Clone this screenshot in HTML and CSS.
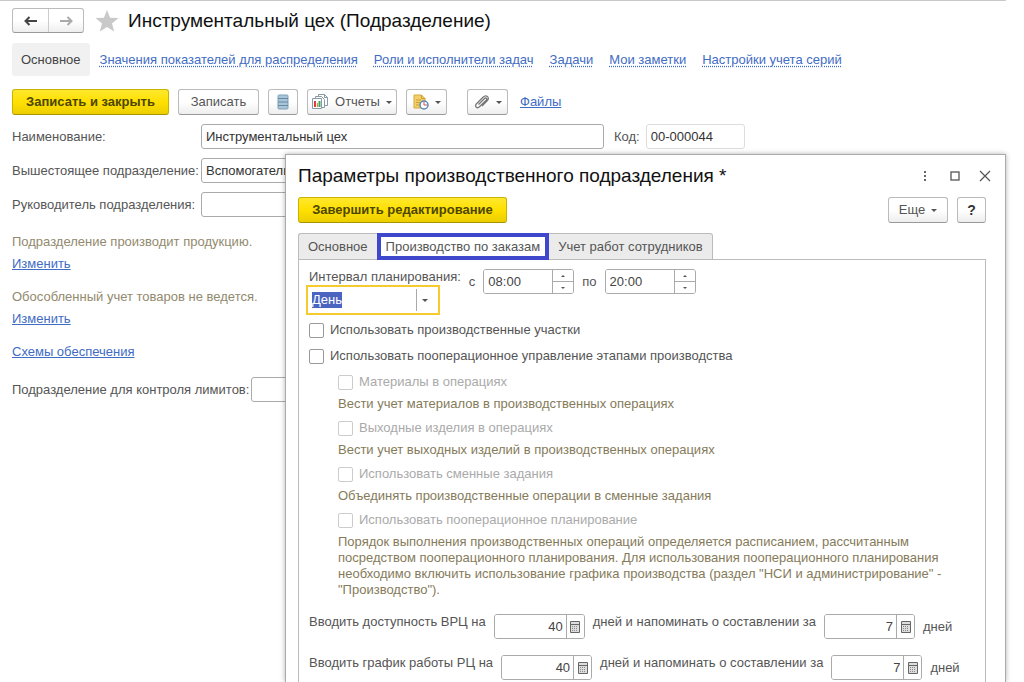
FILE: index.html
```html
<!DOCTYPE html>
<html lang="ru">
<head>
    <meta charset="UTF-8">
    <meta name="viewport" content="width=device-width, initial-scale=1.0">
    <title>Инструментальный цех (Подразделение)</title>
    <link rel="stylesheet" href="styles.css">
</head>
<body>
    <div class="page">
        <div class="titlebar">
            <div class="history">
                <button type="button" aria-label="Назад"><svg width="16" height="12" viewBox="0 0 16 12"><path d="M14 6H3M6.500 2L2.500 6l4 4" fill="none" stroke="#444" stroke-width="2"/></svg></button>
                <button type="button" aria-label="Вперед"><svg width="16" height="12" viewBox="0 0 16 12"><path d="M2 6h11M9.500 2l4 4l-4 4" fill="none" stroke="#aaa" stroke-width="2"/></svg></button>
            </div>
            <svg class="star" width="24" height="22" viewBox="0 0 24 22"><path d="M12 0l3.100 7.700 8.400.4-6.500 5.300 2.200 8-7.200-4.500-7.200 4.500 2.200-8L.5 8.100l8.400-.4z" fill="#c9c9c9"/></svg>
            <h1>Инструментальный цех (Подразделение)</h1>
        </div>
        <nav class="sections">
            <a class="current" href="#">Основное</a>
            <a href="#">Значения показателей для распределения</a>
            <a href="#">Роли и исполнители задач</a>
            <a href="#">Задачи</a>
            <a href="#">Мои заметки</a>
            <a href="#">Настройки учета серий</a>
        </nav>
        <div class="toolbar">
            <button type="button" class="btn yellow save">Записать и закрыть</button>
            <button type="button" class="btn write">Записать</button>
            <button type="button" class="btn icon" aria-label="Список">
                <svg width="12" height="16" viewBox="0 0 12 16"><rect x="1" y="1" width="10" height="14" rx="1" fill="#a9c6d9" stroke="#7c9fb8"/><path d="M1 4.500h10M1 8h10M1 11.500h10" stroke="#6688a3"/></svg>
            </button>
            <button type="button" class="btn reports">
                <svg width="17" height="16" viewBox="0 0 17 16"><path d="M6.500.5h6l3 3v8h-9z" fill="#fff" stroke="#889aa5"/><path d="M12.500.5v3h3" fill="none" stroke="#889aa5"/><path d="M3.500 2.500h6l3 3v8h-9z" fill="#fff" stroke="#889aa5"/><path d="M.5 4.500h9v10h-9z" fill="#fff" stroke="#889aa5"/><path d="M3 7v6" stroke="#e03c3c" stroke-width="2"/><path d="M5.500 9v4" stroke="#e8872e"/><path d="M7.500 7v6" stroke="#3aa655" stroke-width="2"/></svg>
                Отчеты <span class="arrow"></span>
            </button>
            <button type="button" class="btn drop" aria-label="Создать на основании">
                <svg width="16" height="16" viewBox="0 0 16 16"><path d="M1 1h7.500l3.500 3.500V14H1z" fill="#f3cf69" stroke="#d5a93a"/><path d="M8.500 1v3.500H12M3 6h5M3 8.500h4M3 11h3" fill="none" stroke="#c99f35"/><circle cx="11" cy="11" r="4" fill="#fff" stroke="#5b86b5" stroke-width="1.500"/><path d="M11 8v3h3" fill="none" stroke="#d65050"/></svg>
                <span class="arrow"></span>
            </button>
            <button type="button" class="btn drop attach" aria-label="Присоединить">
                <svg width="16" height="16" viewBox="0 0 16 16"><path d="M4.500 10.500l6-6c1.400-1.300 3 .2 1.700 1.600l-6.700 6.700c-2.500 2.300-5.300-.5-3-3L9 3.200c3.500-3.300 7.200.5 4.200 3.600L8 12" fill="none" stroke="#777" stroke-width="1.300"/></svg>
                <span class="arrow"></span>
            </button>
            <a class="files" href="#">Файлы</a>
        </div>

        <div class="field">
            <label for="name">Наименование:</label>
            <input id="name" class="name" type="text" value="Инструментальный цех">
            <label for="code" class="codelabel">Код:</label>
            <input id="code" class="code" type="text" value="00-000044">
        </div>
        <div class="field">
            <label for="parent">Вышестоящее подразделение:</label>
            <input id="parent" class="name" type="text" value="Вспомогательное производство">
        </div>
        <div class="field">
            <label for="head">Руководитель подразделения:</label>
            <input id="head" class="name" type="text" value="">
        </div>
        <div class="info">
            <p>Подразделение производит продукцию.</p>
            <a href="#">Изменить</a>
        </div>
        <div class="info">
            <p>Обособленный учет товаров не ведется.</p>
            <a href="#">Изменить</a>
        </div>
        <div class="info"><a href="#">Схемы обеспечения</a></div>
        <div class="field limits">
            <label for="limit">Подразделение для контроля лимитов:</label>
            <input id="limit" class="name" type="text" value="">
        </div>

        <!-- окно параметров поверх формы -->
        <div class="window" role="dialog" aria-labelledby="wintitle">
            <div class="winhead">
                <h2 id="wintitle">Параметры производственного подразделения *</h2>
                <button type="button" aria-label="Меню"><svg width="12" height="12" viewBox="0 0 12 12"><path d="M5 1h2v2H5zM5 5h2v2H5zM5 9h2v2H5z" fill="#666"/></svg></button>
                <button type="button" aria-label="Развернуть"><svg width="12" height="12" viewBox="0 0 12 12"><rect x="2" y="2" width="8" height="8" fill="none" stroke="#555" stroke-width="1.300"/></svg></button>
                <button type="button" aria-label="Закрыть"><svg width="12" height="12" viewBox="0 0 12 12"><path d="M1 1l10 10M11 1L1 11" stroke="#555" stroke-width="1.200"/></svg></button>
            </div>
            <div class="wintools">
                <button type="button" class="btn yellow finish">Завершить редактирование</button>
                <button type="button" class="btn more">Еще <span class="arrow"></span></button>
                <button type="button" class="btn help">?</button>
            </div>
            <div class="tabs" role="tablist">
                <button type="button" role="tab">Основное</button>
                <button type="button" role="tab" class="active" aria-selected="true">Производство по заказам</button>
                <button type="button" role="tab">Учет работ сотрудников</button>
            </div>
            <div class="panel">
                <div class="interval">
                    <div class="period">
                        <label for="period">Интервал планирования:</label>
                        <div class="combo">
                            <select id="period">
                                <option>День</option>
                                <option>Неделя</option>
                                <option>Месяц</option>
                            </select>
                            <span class="arrow"></span>
                        </div>
                    </div>
                    <label for="from">с</label>
                    <div class="group time">
                        <input id="from" type="text" value="08:00">
                        <div class="spin">
                            <button type="button" aria-label="Больше"><span class="up"></span></button>
                            <button type="button" aria-label="Меньше"><span class="down"></span></button>
                        </div>
                    </div>
                    <label for="to">по</label>
                    <div class="group time">
                        <input id="to" type="text" value="20:00">
                        <div class="spin">
                            <button type="button" aria-label="Больше"><span class="up"></span></button>
                            <button type="button" aria-label="Меньше"><span class="down"></span></button>
                        </div>
                    </div>
                </div>

                <label class="check"><input type="checkbox">Использовать производственные участки</label>
                <label class="check"><input type="checkbox">Использовать пооперационное управление этапами производства</label>
                <div class="nested">
                    <label class="check"><input type="checkbox" disabled>Материалы в операциях</label>
                    <p>Вести учет материалов в производственных операциях</p>
                    <label class="check"><input type="checkbox" disabled>Выходные изделия в операциях</label>
                    <p>Вести учет выходных изделий в производственных операциях</p>
                    <label class="check"><input type="checkbox" disabled>Использовать сменные задания</label>
                    <p>Объединять производственные операции в сменные задания</p>
                    <label class="check"><input type="checkbox" disabled>Использовать пооперационное планирование</label>
                    <p>Порядок выполнения производственных операций определяется расписанием, рассчитанным<br>
                    посредством пооперационного планирования. Для использования пооперационного планирования<br>
                    необходимо включить использование графика производства (раздел "НСИ и администрирование" -<br>
                    "Производство").</p>
                </div>

                <div class="days">
                    <label for="vrc">Вводить доступность ВРЦ на</label>
                    <div class="group num">
                        <input id="vrc" type="text" value="40">
                        <button type="button" aria-label="Калькулятор"><svg width="10" height="12" viewBox="0 0 10 12"><path d="M.5.5h9v11h-9z" fill="#ddd" stroke="#666"/><path d="M1 3.500h8" stroke="#666"/><path d="M2 5.500h6M2 7.500h6M2 9.500h6" stroke="#888" stroke-dasharray="1 1"/></svg></button>
                    </div>
                    <label for="vrcremind">дней и напоминать о составлении за</label>
                    <div class="group num">
                        <input id="vrcremind" type="text" value="7">
                        <button type="button" aria-label="Калькулятор"><svg width="10" height="12" viewBox="0 0 10 12"><path d="M.5.5h9v11h-9z" fill="#ddd" stroke="#666"/><path d="M1 3.500h8" stroke="#666"/><path d="M2 5.500h6M2 7.500h6M2 9.500h6" stroke="#888" stroke-dasharray="1 1"/></svg></button>
                    </div>
                    <span class="unit">дней</span>
                </div>
                <div class="days">
                    <label for="rc">Вводить график работы РЦ на</label>
                    <div class="group num">
                        <input id="rc" type="text" value="40">
                        <button type="button" aria-label="Калькулятор"><svg width="10" height="12" viewBox="0 0 10 12"><path d="M.5.5h9v11h-9z" fill="#ddd" stroke="#666"/><path d="M1 3.500h8" stroke="#666"/><path d="M2 5.500h6M2 7.500h6M2 9.500h6" stroke="#888" stroke-dasharray="1 1"/></svg></button>
                    </div>
                    <label for="rcremind">дней и напоминать о составлении за</label>
                    <div class="group num">
                        <input id="rcremind" type="text" value="7">
                        <button type="button" aria-label="Калькулятор"><svg width="10" height="12" viewBox="0 0 10 12"><path d="M.5.5h9v11h-9z" fill="#ddd" stroke="#666"/><path d="M1 3.500h8" stroke="#666"/><path d="M2 5.500h6M2 7.500h6M2 9.500h6" stroke="#888" stroke-dasharray="1 1"/></svg></button>
                    </div>
                    <span class="unit">дней</span>
                </div>
            </div>
        </div>
    </div>
</body>
</html>
```
FILE: styles.css
```css
*{
    box-sizing: border-box;
}
body{
    margin: 0;
    padding-right: 18px;
    background: #fff;
    font-family: "Liberation Sans", Arial, sans-serif;
    font-size: 13px;
    line-height: 16px;
    color: #555;
    overflow: hidden;
}
button, input, select{
    font: inherit;
    color: inherit;
    margin: 0;
}
svg{
    flex-shrink: 0;
}
h1, h2, p{
    margin: 0;
}
h1, h2{
    font-size: 19px;
    line-height: 24px;
    font-weight: normal;
    color: #111;
}
a{
    color: #3f6cc4;
}
.page{
    position: relative;
    min-height: 100vh;
    padding: 7px 0 0 12px;
    border-top: 1px solid #c8c8c8;
}
.titlebar{
    display: flex;
    align-items: center;
    height: 25px;
}
.history{
    display: flex;
    border: 1px solid #bbb;
    border-bottom-color: #999;
    border-radius: 3px;
    background: linear-gradient(#fff 50%, #eee);
}
.history button{
    width: 35px;
    height: 23px;
    padding: 0;
    border: 0;
    background: none;
}
.history button + button{
    border-left: 1px solid #ccc;
}
.history svg{
    display: block;
    margin: 0 auto;
}
.star{
    margin: 0 9px 0 11px;
}
.sections{
    display: flex;
    align-items: center;
    gap: 16px;
    margin-top: 10px;
}
.sections a{
    text-decoration-style: dotted;
    text-underline-offset: 2px;
}
.sections .current{
    margin-right: -6px;
    padding: 9px 9px 8px;
    border-radius: 3px;
    background: #f1f1f1;
    color: #444;
    text-decoration: none;
}
.toolbar{
    display: flex;
    align-items: center;
    gap: 9px;
    margin: 13px 0 9px;
}
.btn{
    display: flex;
    align-items: center;
    justify-content: center;
    height: 26px;
    padding: 0 4px;
    border: 1px solid #bbb;
    border-bottom-color: #999;
    border-radius: 3px;
    background: linear-gradient(#fff 50%, #eee);
    white-space: nowrap;
}
.yellow{
    border-color: #c9b200;
    border-bottom-color: #a89400;
    background: linear-gradient(#ffe82e, #ffe000 50%, #ecce00);
    color: #4d4600;
    font-weight: bold;
}
.save{
    width: 157px;
}
.write{
    width: 81px;
}
.icon{
    width: 30px;
}
.reports{
    width: 90px;
    gap: 6px;
}
.drop{
    width: 41px;
    gap: 6px;
}
.attach{
    margin-left: 11px;
}
.files{
    margin-left: 3px;
}
.arrow{
    border: 3px solid transparent;
    border-top-color: #555;
    border-bottom: 0;
}
.field{
    display: flex;
    align-items: center;
    margin-bottom: 9px;
}
.field label{
    width: 189px;
    white-space: nowrap;
}
.field input{
    height: 25px;
    padding: 0 4px;
    border: 1px solid #aaa;
    border-radius: 3px;
    background: #fff;
    color: #333;
}
.field .name{
    width: 403px;
}
.field .codelabel{
    width: auto;
    margin: 0 6px 0 10px;
}
.field .code{
    width: 99px;
    border-color: #ddd;
}
.info{
    margin: 17px 0;
}
.info p{
    margin-bottom: 6px;
    color: #928a6e;
}
.info a, .info p{
    display: block;
    width: max-content;
}
.limits label{
    width: auto;
    margin-right: 2px;
}
.window{
    position: absolute;
    top: 153px;
    left: 285px;
    right: 0;
    bottom: 0;
    padding: 9px 19px 0 12px;
    border: 1px solid #aaa;
    border-bottom: 0;
    background: #fff;
    box-shadow: 0 0 5px rgba(0, 0, 0, 0.3);
    display: flex;
    flex-direction: column;
}
.winhead{
    display: flex;
    align-items: center;
    gap: 18px;
    margin-right: -5px;
}
.winhead h2{
    flex: 1;
}
.winhead button{
    display: flex;
    padding: 0;
    border: 0;
    background: none;
}
.wintools{
    display: flex;
    gap: 9px;
    margin: 9px 0 10px;
}
.finish{
    width: 209px;
}
.more{
    width: 60px;
    margin-left: auto;
    gap: 6px;
}
.help{
    width: 29px;
    font-weight: bold;
    font-size: 14px;
    color: #333;
}
.tabs{
    display: flex;
    margin-bottom: -1px;
    position: relative;
}
.tabs button{
    height: 27px;
    padding: 0 9px;
    border: 1px solid #bbb;
    background: #ebebeb;
}
.tabs button:first-child{
    border-right: 0;
    border-top-left-radius: 3px;
}
.tabs button:last-child{
    border-left: 0;
    border-top-right-radius: 3px;
}
.tabs .active{
    padding: 0 5px;
    border: 4px solid #3f48cc;
    background: #fff;
}
.panel{
    flex: 1 0 auto;
    padding: 9px 8px 4px 10px;
    border: 1px solid #bbb;
    border-bottom: 0;
}
.interval{
    display: flex;
    align-items: flex-start;
    gap: 8px;
    margin-bottom: 7px;
}
.interval > label{
    padding-top: 5px;
}
.period{
    display: flex;
    flex-direction: column;
}
.combo{
    display: flex;
    align-items: center;
    width: 134px;
    margin-left: -3px;
    border: 2px solid #f7cb2d;
    position: relative;
}
.combo select{
    appearance: none;
    width: 100%;
    height: 26px;
    padding: 0 4px;
    border: 0;
    outline: 0;
    color: #fff;
    /* выделение текста и разделитель перед стрелкой */
    background: linear-gradient(#4a64c0, #4a64c0) 4px 5px / 30px 16px no-repeat,
        linear-gradient(#aaa, #aaa) 108px 2px / 1px 22px no-repeat,
        #fff;
}
.combo option{
    color: #333;
}
.combo .arrow{
    position: absolute;
    right: 10px;
    pointer-events: none;
}
.group{
    display: flex;
    width: 91px;
    height: 25px;
    border: 1px solid #aaa;
    border-radius: 3px;
    overflow: hidden;
}
.group input{
    flex: 1;
    min-width: 0;
    padding: 0 4px;
    border: 0;
    background: #fff;
    color: #444;
}
.spin{
    display: flex;
    flex-direction: column;
    width: 21px;
    border-left: 1px solid #aaa;
}
.spin button{
    flex: 1;
    display: flex;
    align-items: center;
    justify-content: center;
    padding: 0;
    border: 0;
    background: #fff;
}
.spin button + button{
    border-top: 1px solid #aaa;
}
.up, .down{
    border: 2px solid transparent;
}
.up{
    border-bottom-color: #555;
    border-top: 0;
}
.down{
    border-top-color: #555;
    border-bottom: 0;
}
.check{
    display: flex;
    align-items: center;
    width: max-content;
    margin-bottom: 10px;
}
.check input{
    appearance: none;
    width: 15px;
    height: 15px;
    margin-right: 6px;
    border: 1px solid #999;
    border-radius: 2px;
    background: #fff;
}
.nested{
    padding-left: 29px;
}
.nested .check{
    margin-bottom: 6px;
    color: #aaa;
}
.nested .check input{
    border-color: #ccc;
}
.nested p{
    margin-bottom: 8px;
    color: #857b5a;
    white-space: nowrap;
}
.days{
    display: flex;
    gap: 8px;
    margin-top: 16px;
    white-space: nowrap;
}
.num input{
    padding: 0 3px;
    text-align: right;
}
.num button{
    width: 18px;
    display: flex;
    align-items: center;
    justify-content: center;
    padding: 0;
    border: 0;
    border-left: 1px solid #aaa;
    background: #fff;
}
.unit{
    padding-top: 5px;
}
```
